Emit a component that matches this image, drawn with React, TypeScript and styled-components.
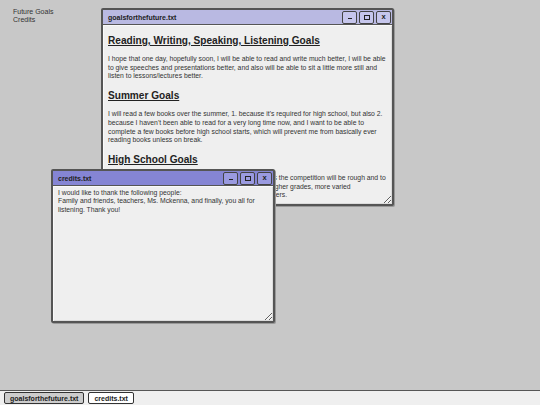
import * as React from "react";
import styled, { createGlobalStyle } from "styled-components";

const GlobalStyle = createGlobalStyle`
  html, body {
    margin: 0;
    padding: 0;
    height: 100%;
  }
  body {
    font-family: "Liberation Sans", Arial, sans-serif;
    background: #c8c8c8;
    color: #222;
  }
  #root {
    height: 100%;
  }
`;

const Screen = styled.div`
  width: 540px;
  height: 405px;
  display: flex;
  flex-direction: column;
  overflow: hidden;
`;

const Desktop = styled.div`
  position: relative;
  flex: 1;
  background: #c8c8c8;
`;

const IconList = styled.ul`
  list-style: none;
  margin: 0;
  padding: 8px 0 0 13px;
  display: flex;
  flex-direction: column;
`;

const IconLabel = styled.li`
  font-size: 7px;
  line-height: 8px;
  color: #333;
`;

const WindowFrame = styled.div<{ $left: number; $top: number; $w: number; $h: number; $z: number }>`
  position: absolute;
  left: ${(p) => p.$left}px;
  top: ${(p) => p.$top}px;
  width: ${(p) => p.$w}px;
  height: ${(p) => p.$h}px;
  z-index: ${(p) => p.$z};
  box-sizing: border-box;
  border: 2px solid #555;
  border-radius: 2px;
  box-shadow: 1px 1px 0 #999;
  background: #efefef;
  display: flex;
  flex-direction: column;
`;

const TitleBar = styled.div<{ $active: boolean }>`
  height: 14px;
  flex-shrink: 0;
  display: flex;
  align-items: center;
  justify-content: space-between;
  padding: 0 1px 0 5px;
  background: ${(p) => (p.$active ? "#8585d4" : "#b9b9e2")};
  border-bottom: 1.5px solid #555;
`;

const TitleText = styled.span`
  font-size: 7px;
  font-weight: bold;
  color: #222;
`;

const Controls = styled.div`
  display: flex;
  gap: 2px;
`;

const ControlButton = styled.button<{ $active: boolean }>`
  width: 15px;
  height: 13px;
  box-sizing: border-box;
  padding: 0;
  border: 1.5px solid #444;
  border-radius: 2px;
  background: ${(p) => (p.$active ? "#9a9ae0" : "#c6c6ec")};
  display: flex;
  align-items: center;
  justify-content: center;
  font-family: "Liberation Sans", Arial, sans-serif;
  font-size: 7.5px;
  font-weight: bold;
  color: #222;
  line-height: 1;
`;

const MinBar = styled.span`
  width: 4px;
  height: 1.5px;
  background: #222;
  margin-top: 3px;
`;

const MaxBox = styled.span`
  width: 6px;
  height: 5px;
  box-sizing: border-box;
  border: 1.2px solid #222;
`;

const Content = styled.div`
  flex: 1;
  padding: 1px 1px 0 5px;
  overflow: hidden;
  resize: both;
  background: #efefef;
  box-shadow: inset 1px 1px 0 #fafafa, inset -1px -1px 0 #dcdcdc;
  color: #333;
`;

const Heading = styled.h2`
  margin: 8px 0 8px;
  font-size: 10.1px;
  font-weight: bold;
  text-decoration: underline;
  color: #222;
  line-height: 13px;
`;

const Para = styled.p`
  margin: 0;
  font-size: 6.8px;
  line-height: 8.7px;
`;

const Note = styled.div`
  padding-top: 2px;
  font-size: 6.8px;
  line-height: 8.4px;
  white-space: pre-line;
`;

const Taskbar = styled.div`
  height: 14px;
  flex-shrink: 0;
  display: flex;
  align-items: center;
  gap: 4px;
  padding: 0 4px;
  background: #efefef;
  border-top: 1.5px solid #555;
`;

const TaskButton = styled.button<{ $pressed: boolean }>`
  height: 12px;
  padding: 0 5px;
  box-sizing: border-box;
  border: 1px solid #333;
  border-radius: 2px;
  background: ${(p) => (p.$pressed ? "#cccccc" : "#ffffff")};
  font-family: "Liberation Sans", Arial, sans-serif;
  font-size: 7px;
  font-weight: bold;
  color: #222;
  line-height: 1;
`;

type WinProps = {
  title: string;
  active: boolean;
  left: number;
  top: number;
  w: number;
  h: number;
  z: number;
  children: React.ReactNode;
};

function Window({ title, active, left, top, w, h, z, children }: WinProps) {
  return (
    <WindowFrame $left={left} $top={top} $w={w} $h={h} $z={z}>
      <TitleBar $active={active}>
        <TitleText>{title}</TitleText>
        <Controls>
          <ControlButton $active={active}><MinBar /></ControlButton>
          <ControlButton $active={active}><MaxBox /></ControlButton>
          <ControlButton $active={active}>x</ControlButton>
        </Controls>
      </TitleBar>
      <Content>{children}</Content>
    </WindowFrame>
  );
}

export default function App() {
  return (
    <Screen>
      <GlobalStyle />
      <Desktop>
        <IconList>
          <IconLabel>Future Goals</IconLabel>
          <IconLabel>Credits</IconLabel>
        </IconList>

        <Window title="goalsforthefuture.txt" active={false} left={101} top={8} w={293} h={198} z={1}>
          <Heading>Reading, Writing, Speaking, Listening Goals</Heading>
          <Para>
            I hope that one day, hopefully soon, I will be able to read and write much better, I will be able
            to give speeches and presentations better, and also will be able to sit a little more still and
            listen to lessons/lectures better.
          </Para>
          <Heading>Summer Goals</Heading>
          <Para>
            I will read a few books over the summer, 1. because it's required for high school, but also 2.
            because I haven't been able to read for a very long time now, and I want to be able to
            complete a few books before high school starts, which will prevent me from basically ever
            reading books unless on break.
          </Para>
          <Heading>High School Goals</Heading>
          <Para>
            I want to get very good marks throughout high school as the competition will be rough and to
            <br />
            get into a really good college later, I will need to have higher grades, more varied
            <br />
            extracurricular activities and more time spent as volunteers.
          </Para>
        </Window>

        <Window title="credits.txt" active={true} left={51} top={169} w={224} h={154} z={2}>
          <Note>
            {"I would like to thank the following people:\nFamily and friends, teachers, Ms. Mckenna, and finally, you all for listening. Thank you!"}
          </Note>
        </Window>
      </Desktop>
      <Taskbar>
        <TaskButton $pressed={true}>goalsforthefuture.txt</TaskButton>
        <TaskButton $pressed={false}>credits.txt</TaskButton>
      </Taskbar>
    </Screen>
  );
}
